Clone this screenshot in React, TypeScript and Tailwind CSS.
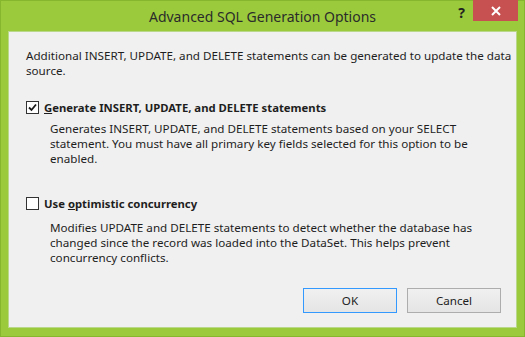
import React from "react";

const font = { fontFamily: '"Noto Sans", "Open Sans", sans-serif' };

function Check({ checked }: { checked: boolean }) {
  return (
    <span className="flex h-[13px] w-[13px] shrink-0 items-center justify-center border border-[#333333] bg-white">
      {checked && (
        <svg width="9" height="9" viewBox="0 0 9 9">
          <path d="M1 4.5 L3.5 7 L8 1.5" fill="none" stroke="#1a1a1a" strokeWidth="1.8" />
        </svg>
      )}
    </span>
  );
}

export default function App() {
  return (
    <div
      className="relative flex h-[337px] w-[525px] flex-col border border-[#86b52e] bg-[#9bcb3c] text-[11.65px] leading-[15px] text-[#1e1e1e]"
      style={font}
    >
      {/* title bar */}
      <div className="flex h-[30px] shrink-0 items-center justify-center pt-[1px] text-[14px] text-[#2b2b2b]">
        Advanced SQL Generation Options
      </div>
      <span className="absolute right-[59px] top-[3px] text-[14px] font-bold leading-[18px] text-[#222]">?</span>
      <button className="absolute right-[6px] top-[-1px] flex h-[21px] w-[45px] items-center justify-center bg-[#c75050]">
        <svg width="10" height="10" viewBox="0 0 10 10">
          <path d="M1 1 L9 9 M9 1 L1 9" stroke="#fff" strokeWidth="2" />
        </svg>
      </button>

      {/* content */}
      <div className="ml-[7px] mr-[7px] flex h-[297px] flex-col whitespace-nowrap border border-[#b9d88a] bg-[#f0f0f0] pl-[17px] pr-[15px] pt-[16px]">
        <p>
          Additional INSERT, UPDATE, and DELETE statements can be generated to update the data
          <br />
          source.
        </p>

        <div className="mt-[22px] flex items-center gap-[5px]">
          <Check checked />
          <span className="text-[11.3px] font-bold">
            <span className="underline">G</span>enerate INSERT, UPDATE, and DELETE statements
          </span>
        </div>
        <p className="ml-[24px] mt-[6px]">
          Generates INSERT, UPDATE, and DELETE statements based on your SELECT
          <br />
          statement. You must have all primary key fields selected for this option to be
          <br />
          enabled.
        </p>

        <div className="mt-[30px] flex items-center gap-[5px]">
          <Check checked={false} />
          <span className="text-[11.3px] font-bold">
            Use <span className="underline">o</span>ptimistic concurrency
          </span>
        </div>
        <p className="ml-[24px] mt-[9px]">
          Modifies UPDATE and DELETE statements to detect whether the database has
          <br />
          changed since the record was loaded into the DataSet. This helps prevent
          <br />
          concurrency conflicts.
        </p>

        <div className="mt-auto mb-[14px] flex justify-end gap-[10px]">
          <button className="h-[25px] w-[94px] border border-[#3399ff] bg-gradient-to-b from-[#f0f0f0] to-[#e5e5e5]">
            OK
          </button>
          <button className="h-[25px] w-[94px] border border-[#adadad] bg-gradient-to-b from-[#f0f0f0] to-[#e5e5e5]">
            Cancel
          </button>
        </div>
      </div>
    </div>
  );
}
